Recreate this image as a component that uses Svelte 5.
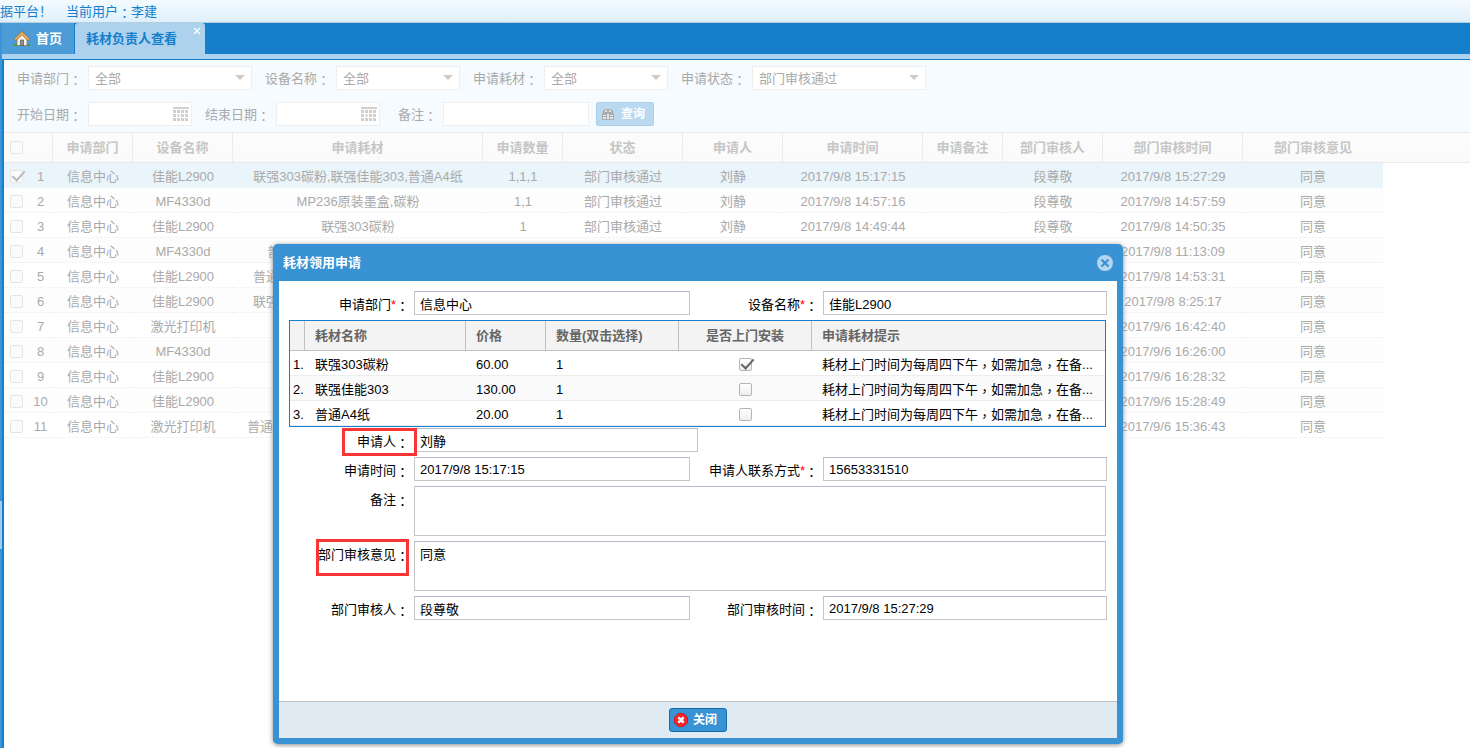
<script>
  const filters = {
    dept: ['全部'],
    device: ['全部'],
    material: ['全部'],
    status: ['部门审核通过']
  };

  const columns = [
    '申请部门', '设备名称', '申请耗材', '申请数量', '状态', '申请人',
    '申请时间', '申请备注', '部门审核人', '部门审核时间', '部门审核意见'
  ];

  const pass = '部门审核通过';
  const auditor = '段尊敬';
  const records = [
    { device: '佳能L2900', material: '联强303碳粉,联强佳能303,普通A4纸', count: '1,1,1', status: pass, user: '刘静', time: '2017/9/8 15:17:15', auditor, audited: '2017/9/8 15:27:29' },
    { device: 'MF4330d', material: 'MP236原装墨盒,碳粉', count: '1,1', status: pass, user: '刘静', time: '2017/9/8 14:57:16', auditor, audited: '2017/9/8 14:57:59' },
    { device: '佳能L2900', material: '联强303碳粉', count: '1', status: pass, user: '刘静', time: '2017/9/8 14:49:44', auditor, audited: '2017/9/8 14:50:35' },
    { device: 'MF4330d', material: '普', indent: 34, audited: '2017/9/8 11:13:09' },
    { device: '佳能L2900', material: '普通', indent: 20, audited: '2017/9/8 14:53:31' },
    { device: '佳能L2900', material: '联强', indent: 20, audited: '2017/9/8 8:25:17' },
    { device: '激光打印机', audited: '2017/9/6 16:42:40' },
    { device: 'MF4330d', audited: '2017/9/6 16:26:00' },
    { device: '佳能L2900', audited: '2017/9/6 16:28:32' },
    { device: '佳能L2900', audited: '2017/9/6 15:28:49' },
    { device: '激光打印机', material: '普通', indent: 14, audited: '2017/9/6 15:36:43' }
  ];

  const items = [
    { name: '联强303碳粉', price: '60.00', count: 1, install: true },
    { name: '联强佳能303', price: '130.00', count: 1, install: false },
    { name: '普通A4纸', price: '20.00', count: 1, install: false }
  ];
</script>

{#snippet colon()}<span class="punct">：</span>{/snippet}
{#snippet comma()}<span class="punct">，</span>{/snippet}

{#snippet calendar()}
  <svg class="calendar" viewBox="0 0 16 16" aria-hidden="true">
    <path d="M0 1h16v2H0z M0 4h3v3H0zM4 4h3v3H4zM8 4h3v3H8zM12 4h3v3h-3z M0 8h3v3H0zM8 8h3v3H8zM12 8h3v3h-3z M0 12h3v3H0zM4 12h3v3H4zM8 12h3v3H8zM12 12h3v3h-3z M5 8h1v1h1v1H6v1H5v-1H4V9h1z" />
  </svg>
{/snippet}

<div class="page">
  <header class="banner">
    <span>据平台！</span>
    <span>当前用户{@render colon()}李建</span>
  </header>

  <div class="workspace">
    <div class="splitter"><i></i></div>
    <main>
      <nav class="tabs">
        <button class="tab home">
          <svg viewBox="0 0 16 16" aria-hidden="true">
            <path d="M0 13h4l1 2H0zM11 13h5v2h-5z" fill="#4d9b35" />
            <path d="M3 7.500 8 3l5 4.500V14.500H3z" fill="#f6f3ec" stroke="#8f7a5c" stroke-width=".8" />
            <path d="M1 9 8 2l7 7" fill="none" stroke="#a8641c" stroke-width="3" />
            <path d="M1.200 8.600 8 1.900l6.800 6.700" fill="none" stroke="#eab267" stroke-width="1.800" />
            <path d="M6.500 9h3v5.500h-3z" fill="#8b8f96" stroke="#5c5248" stroke-width=".7" />
          </svg>
          首页
        </button>
        <button class="tab active">耗材负责人查看
          <svg viewBox="0 0 8 8" aria-hidden="true"><path d="m1 1 6 6M7 1 1 7" stroke="#fff" stroke-width="1.300" /></svg>
        </button>
      </nav>

      <section class="content">
        <form class="filters">
          <div class="line">
            <label for="f-dept">申请部门{@render colon()}</label>
            <span class="pick w164"><select id="f-dept">{#each filters.dept as o}<option>{o}</option>{/each}</select></span>
            <label for="f-device">设备名称{@render colon()}</label>
            <span class="pick w124"><select id="f-device">{#each filters.device as o}<option>{o}</option>{/each}</select></span>
            <label for="f-material">申请耗材{@render colon()}</label>
            <span class="pick w124"><select id="f-material">{#each filters.material as o}<option>{o}</option>{/each}</select></span>
            <label for="f-status">申请状态{@render colon()}</label>
            <span class="pick w174"><select id="f-status">{#each filters.status as o}<option>{o}</option>{/each}</select></span>
          </div>
          <div class="line">
            <label for="f-start">开始日期{@render colon()}</label>
            <span class="date"><input id="f-start" type="text" />{@render calendar()}</span>
            <label for="f-end">结束日期{@render colon()}</label>
            <span class="date"><input id="f-end" type="text" />{@render calendar()}</span>
            <label class="remark" for="f-remark">备注{@render colon()}</label>
            <input id="f-remark" class="w146" type="text" />
            <button type="button" class="query">
              <svg viewBox="0 0 14 14" aria-hidden="true">
                <path d="M4 2h6l2 2v2h1v7H1V6h1V4z" fill="#a9adb0" />
                <path d="M4 3h2v2H4zM8 3h2v2H8zM2 8h3v1H2zM2 10h3v2H2zM6 7h2v5H6zM9 8h3v1H9zM9 10h3v2H9z" fill="#e3e3e3" />
              </svg>
              查询
            </button>
          </div>
        </form>

        <div class="thead-band">
          <table class="records">
            <colgroup>
              <col class="c24" /><col class="c25" /><col class="c80" /><col class="c100" /><col class="c250" /><col class="c80" /><col class="c120" /><col class="c100" /><col class="c140" /><col class="c80" /><col class="c100" /><col class="c140" /><col class="c140" />
            </colgroup>
            <thead>
              <tr>
                <th><input type="checkbox" aria-label="全选" /></th>
                <th></th>
                {#each columns as c}<th>{c}</th>{/each}
              </tr>
            </thead>
            <tbody>
              {#each records as r, i}
                <tr class:selected={i === 0}>
                  <td><input type="checkbox" checked={i === 0} aria-label={`${i + 1}`} /></td>
                  <td>{i + 1}</td>
                  <td>信息中心</td>
                  <td>{r.device}</td>
                  {#if r.indent}
                    <td class="start" style:padding-left="{r.indent}px">{r.material}</td>
                  {:else}
                    <td>{r.material ?? ''}</td>
                  {/if}
                  <td>{r.count ?? ''}</td>
                  <td>{r.status ?? ''}</td>
                  <td>{r.user ?? ''}</td>
                  <td>{r.time ?? ''}</td>
                  <td></td>
                  <td>{r.auditor ?? ''}</td>
                  <td>{r.audited}</td>
                  <td>同意</td>
                </tr>
              {/each}
            </tbody>
          </table>
        </div>
      </section>
    </main>
  </div>

  <div class="dialog" role="dialog" aria-labelledby="dialog-title">
    <div class="title">
      <h2 id="dialog-title">耗材领用申请</h2>
      <button class="dismiss" aria-label="关闭">
        <svg viewBox="0 0 16 16" aria-hidden="true">
          <circle cx="8" cy="8" r="8" fill="#b4d5ee" />
          <path d="m4.500 4.500 7 7m0-7-7 7" stroke="#3892d3" stroke-width="2.200" />
        </svg>
      </button>
    </div>

    <form class="body">
      <div class="row">
        <label for="d-dept">申请部门<em>*</em>{@render colon()}</label>
        <input id="d-dept" type="text" value="信息中心" />
        <label for="d-device">设备名称<em>*</em>{@render colon()}</label>
        <input id="d-device" type="text" value="佳能L2900" />
      </div>

      <table class="items">
        <colgroup><col class="i-no" /><col class="i-name" /><col class="i-price" /><col class="i-count" /><col class="i-install" /><col /></colgroup>
        <thead>
          <tr><th></th><th>耗材名称</th><th>价格</th><th>数量(双击选择)</th><th class="mid">是否上门安装</th><th>申请耗材提示</th></tr>
        </thead>
        <tbody>
          {#each items as it, i}
            <tr>
              <td class="no">{i + 1}.</td>
              <td>{it.name}</td>
              <td>{it.price}</td>
              <td>{it.count}</td>
              <td class="mid"><input type="checkbox" checked={it.install} aria-label="是否上门安装" /></td>
              <td>耗材上门时间为每周四下午{@render comma()}如需加急{@render comma()}在备...</td>
            </tr>
          {/each}
        </tbody>
      </table>

      <div class="row applicant">
        <label for="d-user">申请人{@render colon()}<i class="mark mark-user"></i></label>
        <input id="d-user" type="text" value="刘静" />
      </div>
      <div class="row">
        <label for="d-time">申请时间{@render colon()}</label>
        <input id="d-time" type="text" value="2017/9/8 15:17:15" />
        <label for="d-phone">申请人联系方式<em>*</em>{@render colon()}</label>
        <input id="d-phone" type="text" value="15653331510" />
      </div>
      <div class="row wide">
        <label for="d-remark">备注{@render colon()}</label>
        <textarea id="d-remark"></textarea>
      </div>
      <div class="row wide">
        <label for="d-opinion">部门审核意见{@render colon()}<i class="mark mark-opinion"></i></label>
        <textarea id="d-opinion" value="同意"></textarea>
      </div>
      <div class="row">
        <label for="d-auditor">部门审核人{@render colon()}</label>
        <input id="d-auditor" type="text" value="段尊敬" />
        <label for="d-audit-time">部门审核时间{@render colon()}</label>
        <input id="d-audit-time" type="text" value="2017/9/8 15:27:29" />
      </div>
    </form>

    <footer>
      <button class="close">
        <svg viewBox="0 0 16 16" aria-hidden="true">
          <path d="M5 .5h6L15.500 5v6L11 15.500H5L.5 11V5z" fill="#f0262b" stroke="#d80f14" stroke-linejoin="round" />
          <path d="m5 5 6 6m0-6-6 6" stroke="#fff" stroke-width="3" />
        </svg>
        关闭
      </button>
    </footer>
  </div>
</div>

<style>
  :global(body) { overflow: hidden; }
  .page, .page button, .page input, .page select, .page textarea {
    font: 13px/18px "Liberation Sans", "Noto Sans CJK SC", sans-serif;
  }
  .page { position: relative; min-height: 100vh; display: flex; flex-direction: column; background: #fff; }
  .page * { box-sizing: border-box; }
  .punct { font-family: "Noto Sans CJK TC", sans-serif; line-height: 1; vertical-align: -2px; }

  .banner {
    display: flex; gap: 14px; align-items: center; height: 23px; padding-top: 1px;
    color: #157fcc; background: linear-gradient(#f4fbff, #dff0fb); border-bottom: 1px solid #b5cfe0;
  }

  .workspace { flex: 1; display: flex; background: #157fcc; }
  .splitter { width: 2px; background: #3c93d5; display: flex; padding-top: 478px; }
  .splitter i { width: 2px; height: 48px; background: #a3cdec; }
  main { flex: 1; min-width: 0; display: flex; flex-direction: column; }
  .tabs { display: flex; gap: 1px; height: 36px; border-bottom: 5px solid #add2ed; }
  .page .tab {
    display: flex; align-items: center; border: 0; height: 31px; color: #fff;
    background: #4b9cd7; font-weight: bold; padding: 0 12px;
  }
  .home svg { width: 16px; height: 16px; margin-right: 6px; }
  .page .active { position: relative; background: #add2ed; color: #157fcc; padding: 0 28px 0 11px; border-radius: 3px 3px 0 0; }
  .active svg { position: absolute; right: 4px; top: 4px; width: 8px; height: 8px; }

  .content { flex: 1; margin-left: 2px; border-top: 1px solid #157fcc; background: #fff; color: #aaa; }
  .filters { background: #f5fbfe; height: 72px; padding: 6px 12px; display: flex; flex-direction: column; gap: 12px; }
  .line { display: flex; align-items: center; }
  .line label { width: 72px; padding: 2px 0 0 1px; }
  .line label:not(:first-child) { width: 84px; padding-left: 13px; }
  .line .remark:not(:first-child) { width: 63px; padding-left: 18px; }
  .pick { position: relative; height: 24px; }
  .pick::after {
    content: ""; position: absolute; right: 7px; top: 9px; border: 5px solid transparent;
    border-top-color: #ccc; border-bottom: 0; pointer-events: none;
  }
  .line select, .line input {
    appearance: none; display: block; width: 100%; height: 24px; margin: 0; padding: 2px 6px 0;
    color: #aaa; background: #fff; border: 1px solid #eee; border-radius: 0;
  }
  .w164 { width: 164px; }
  .w124 { width: 124px; }
  .w174 { width: 174px; }
  .line input.w146 { width: 146px; }
  .date { position: relative; width: 104px; }
  .calendar { position: absolute; right: 3px; top: 4px; width: 16px; height: 16px; fill: #d0d0d0; }
  .page .query {
    display: flex; align-items: center; gap: 6px; margin-left: 7px; height: 24px; width: 58px; padding: 0 4px;
    color: #fff; font-weight: bold; font-size: 12px; background: #b9d9f0; border: 1px solid #acd0ea; border-radius: 2px;
  }
  .query svg { width: 14px; height: 14px; flex: none; }

  .thead-band { background: linear-gradient(#fcfcfc, #fafafa) 0 0 / 100% 31px no-repeat; position: relative; }
  .thead-band::before, .thead-band::after { content: ""; position: absolute; left: 0; right: 0; border-top: 1px solid #eaeaea; }
  .thead-band::before { top: 0; }
  .thead-band::after { top: 30px; }
  table { border-collapse: separate; border-spacing: 0; table-layout: fixed; }
  .records { width: 1379px; }
  .c24 { width: 24px; } .c25 { width: 25px; } .c80 { width: 80px; } .c100 { width: 100px; }
  .c120 { width: 120px; } .c140 { width: 140px; } .c250 { width: 250px; }
  .records th, .records td { padding: 0; text-align: center; white-space: nowrap; overflow: hidden; }
  .records th { height: 31px; color: #c6c6c6; border-right: 1px solid #ebebeb; }
  .records th:first-child, .records th:last-child { border-right: 0; }
  .records td { height: 25px; padding-top: 3px; border-bottom: 1px dotted #eee; }
  .records .start { text-align: left; }
  .records .selected td { background: #e9f4fb; border-bottom-color: #e9f4fb; }
  .records tr:nth-child(even) td { background: #fdfdfd; }

  input[type="checkbox"] {
    appearance: none; display: block; position: relative; width: 13px; height: 13px; margin: 0 auto;
    border: 1px solid #b5b5b5; border-radius: 2px; background: linear-gradient(#fff, #eee);
  }
  input[type="checkbox"]:checked::after {
    content: ""; position: absolute; left: 4px; top: -3px; width: 5px; height: 11px;
    border: solid #666; border-width: 0 2px 2px 0; transform: rotate(42deg);
  }
  .records input[type="checkbox"] { border-color: #e5e5e5; background: #fbfbfb; }
  .records input[type="checkbox"]:checked::after { border-color: #bbb; }

  .dialog {
    position: absolute; left: calc(50% - 462px); top: 244px; width: 850px; height: 500px;
    display: flex; flex-direction: column; border: solid #3892d3; border-width: 0 6px 6px;
    border-radius: 5px; background: #fff; color: #000; box-shadow: 0 1px 5px #888;
  }
  .title { display: flex; align-items: center; justify-content: space-between; height: 37px; padding: 0 4px; background: #3892d3; }
  .title h2 { margin: 0; color: #fff; font-size: 13px; line-height: 18px; }
  .dismiss { border: 0; background: none; padding: 0; width: 16px; height: 16px; }
  .page svg { display: block; }

  .body { flex: 1; padding: 10px 10px 0; }
  .row { display: grid; grid-template-columns: 125px 276px 133px 1fr; margin-bottom: 5px; }
  .row label { position: relative; text-align: right; padding: 5px 5px 0 0; white-space: nowrap; }
  .row em { color: #f00; font-style: normal; }
  .applicant { grid-template-columns: 125px 284px; }
  .wide { grid-template-columns: 125px 1fr; padding-right: 1px; }
  .row input, .row textarea {
    display: block; width: 100%; height: 24px; margin: 0; padding: 2px 5px; border: 1px solid #c5c5c5;
    border-top-color: #b5b8c8; background: #fff; color: #000; border-radius: 0; resize: none; outline: 0;
  }
  .row textarea { height: 50px; padding-top: 4px; }
  .mark { position: absolute; border: 3px solid #f93535; z-index: 1; }
  .mark-user { left: 53px; right: -3px; top: 0; height: 28px; }
  .mark-opinion { left: 27px; right: 5px; top: -2px; height: 37px; }

  .items { width: 817px; border: 1px solid #157fcc; margin-bottom: 1px; }
  .i-no { width: 15px; } .i-name { width: 161px; } .i-price { width: 80px; } .i-count { width: 133px; } .i-install { width: 133px; }
  .items th {
    height: 30px; padding: 0 10px; text-align: left; color: #666; background: #f3f3f3;
    border-right: 1px solid #c0c0c0; border-bottom: 1px solid #c0c0c0; white-space: nowrap;
  }
  .items th:last-child { border-right: 0; }
  .items td { height: 25px; padding: 3px 10px 0; border-bottom: 1px solid #ededed; white-space: nowrap; overflow: hidden; }
  .items tr:nth-child(even) td { background: #fafafa; }
  .items .no { padding: 3px 0 0 3px; }
  .items .mid { text-align: center; }
  .items td:last-child { padding-right: 0; }

  footer { display: flex; justify-content: center; align-items: center; height: 37px; background: #dfeaf2; border-top: 1px solid #bfc3c6; }
  .page .close {
    display: flex; align-items: center; gap: 5px; width: 58px; height: 24px; padding: 0 4px; color: #fff;
    font-weight: bold; font-size: 12px; background: #3892d3; border: 1px solid #126daf; border-radius: 3px; white-space: nowrap;
  }
  .close svg { width: 14px; height: 14px; flex: none; }
</style>
